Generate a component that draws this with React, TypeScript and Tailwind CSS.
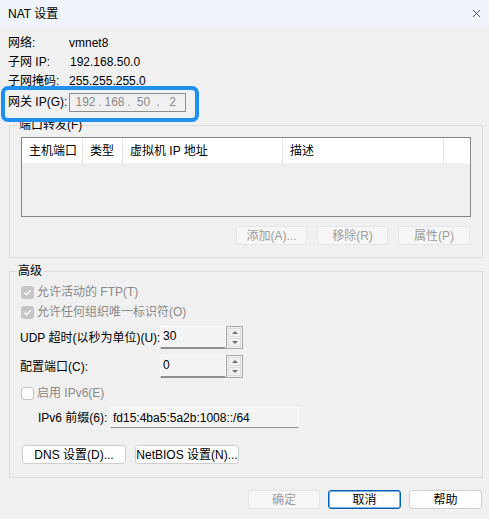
import { X } from "lucide-react";

const Btn = ({ label, w, disabled, focused }: { label: string; w: string; disabled?: boolean; focused?: boolean }) => (
  <div
    className={`${w} h-[19px] flex items-center justify-center rounded-[3px] border text-[12px] leading-none ${
      disabled
        ? "border-[#e5e5e5] bg-[#f6f6f6] text-[#9d9d9d]"
        : focused
        ? "border-[#005fb8] bg-[#fdfdfd] text-black shadow-[inset_0_0_0_0.5px_#005fb8]"
        : "border-[#cfcfcf] bg-[#fdfdfd] text-black"
    }`}
  >
    {label}
  </div>
);

const CheckBox = ({ checked, label }: { checked?: boolean; label: string }) => (
  <div className="h-[20px] flex items-center gap-[3px]">
    {checked ? (
      <span className="h-[13px] w-[13px] rounded-[3px] bg-[#c6c6c6] flex items-center justify-center">
        <svg width="9" height="9" viewBox="0 0 9 9">
          <path d="M1.5 4.8 L3.6 6.8 L7.6 2.2" fill="none" stroke="#ffffff" strokeWidth="1.3" />
        </svg>
      </span>
    ) : (
      <span className="h-[13px] w-[13px] rounded-[3px] border border-[#c4c4c4] bg-[#fbfbfb]" />
    )}
    <span className="text-[12px] leading-none text-[#8a8a8a]">{label}</span>
  </div>
);

const Spinner = ({ value }: { value: string }) => (
  <div className="flex h-[23px] shrink-0">
    <div className="w-[66px] h-full bg-[#f3f3f3] border border-[#fbfbfb] border-b-2 border-b-[#8f8f8f] pl-[2px] flex items-start pt-[3px] text-[12px] leading-none text-black">
      {value}
    </div>
    <div className="w-[17px] h-full border border-[#a8a8a8] p-[1px] flex flex-col gap-[1px]">
      <div className="flex-1 border border-[#dcdcdc] bg-[#f0f0f0] flex items-center justify-center">
        <svg width="6" height="3" viewBox="0 0 6 3">
          <path d="M0 3 L3 0 L6 3 Z" fill="#707070" />
        </svg>
      </div>
      <div className="flex-1 border border-[#dcdcdc] bg-[#f0f0f0] flex items-center justify-center">
        <svg width="6" height="3" viewBox="0 0 6 3">
          <path d="M0 0 L6 0 L3 3 Z" fill="#707070" />
        </svg>
      </div>
    </div>
  </div>
);

const columns = [
  { name: "主机端口", w: "w-[61px]" },
  { name: "类型", w: "w-[40px]" },
  { name: "虚拟机 IP 地址", w: "w-[160px]" },
  { name: "描述", w: "w-[161px]" },
  { name: "", w: "flex-1" },
];

const octets = ["192", "168", "50", "2"];

export default function App() {
  return (
    <div className="relative w-[489px] h-[519px] bg-[#f0f0f0] font-['Liberation_Sans','Noto_Sans_CJK_SC',sans-serif] text-[12px] text-black overflow-hidden">
      {/* title bar */}
      <div className="h-[27px] bg-[#eef4f9] flex items-center justify-between pl-[8px] pr-[6px]">
        <span className="text-[12px] leading-none">NAT 设置</span>
        <X size={13} strokeWidth={1.3} className="text-[#1a1a1a]" />
      </div>

      <div className="px-[8px]">
        {/* network info */}
        <div className="pt-[6px]">
          <div className="h-[19px] flex items-center">
            <span className="w-[61px]">网络:</span>
            <span>vmnet8</span>
          </div>
          <div className="h-[19px] flex items-center">
            <span className="w-[62px]">子网 IP:</span>
            <span>192.168.50.0</span>
          </div>
          <div className="h-[19px] flex items-center">
            <span className="w-[61px]">子网掩码:</span>
            <span>255.255.255.0</span>
          </div>
          <div className="mt-[2px] h-[20px] flex items-center">
            <span className="w-[61px] whitespace-nowrap">网关 IP(G):</span>
            <div className="w-[117px] h-[19px] border border-[#8c8c8c] bg-[#f0f0f0] flex items-center pl-[5px] text-[#8a8a8a]">
              {octets.map((o, i) => (
                <div key={i} className="flex items-center">
                  <span className="w-[21px] text-center">{o}</span>
                  {i < octets.length - 1 && <span className="w-[8px] text-center">.</span>}
                </div>
              ))}
            </div>
          </div>
        </div>

        {/* port forwarding group */}
        <div className="relative mt-[13px] ml-[1px] w-[474px] h-[133px] border border-[#dcdcdc] pt-[11px] pl-[11px]">
          <span className="absolute -top-[9px] left-[8px] bg-[#f0f0f0] px-[1px] leading-[16px]">端口转发(F)</span>
          <div className="w-[450px] h-[80px] border border-[#868686] bg-[#f0f0f0]">
            <div className="h-[25px] bg-white flex">
              {columns.map((c, i) => (
                <div
                  key={i}
                  className={`${c.w} h-full flex items-center pl-[7px] ${i < columns.length - 1 ? "border-r border-[#e5e5e5]" : ""}`}
                >
                  {c.name}
                </div>
              ))}
            </div>
          </div>
          <div className="mt-[9px] w-[450px] flex justify-end gap-[10px] pr-[1px]">
            <Btn label="添加(A)..." w="w-[71px]" disabled />
            <Btn label="移除(R)" w="w-[71px]" disabled />
            <Btn label="属性(P)" w="w-[72px]" disabled />
          </div>
        </div>

        {/* advanced group */}
        <div className="relative mt-[13px] ml-[1px] w-[474px] h-[207px] border border-[#dcdcdc] pt-[10px] pl-[11px]">
          <span className="absolute -top-[9px] left-[7px] bg-[#f0f0f0] px-[1px] leading-[16px]">高级</span>
          <CheckBox checked label="允许活动的 FTP(T)" />
          <CheckBox checked label="允许任何组织唯一标识符(O)" />
          <div className="mt-[4px] flex items-center -ml-[1px]">
            <span className="w-[140px] shrink-0 whitespace-nowrap">UDP 超时(以秒为单位)(U):</span>
            <Spinner value="30" />
          </div>
          <div className="mt-[6px] flex items-center -ml-[1px]">
            <span className="w-[140px] shrink-0 whitespace-nowrap">配置端口(C):</span>
            <Spinner value="0" />
          </div>
          <div className="mt-[5px]">
            <CheckBox label="启用 IPv6(E)" />
          </div>
          <div className="mt-[4px] flex items-center pl-[17px]">
            <span className="w-[72px] shrink-0 whitespace-nowrap">IPv6 前缀(6):</span>
            <div className="w-[189px] h-[21px] bg-[#f3f3f3] border border-[#fbfbfb] border-b-[#8f8f8f] flex items-center pl-[2px]">
              fd15:4ba5:5a2b:1008::/64
            </div>
          </div>
          <div className="mt-[17px] flex gap-[9px] pl-[1px]">
            <Btn label="DNS 设置(D)..." w="w-[104px]" />
            <Btn label="NetBIOS 设置(N)..." w="w-[104px]" />
          </div>
        </div>

        {/* dialog buttons */}
        <div className="mt-[12px] w-[475px] flex justify-end gap-[8px] pr-[1px]">
          <Btn label="确定" w="w-[72px]" disabled />
          <Btn label="取消" w="w-[73px]" focused />
          <Btn label="帮助" w="w-[73px]" />
        </div>
      </div>

      {/* highlight annotation */}
      <div className="absolute left-[1px] top-[86px] w-[198px] h-[36px] border-[4px] border-[#1e90f0] rounded-[7px] pointer-events-none" />
    </div>
  );
}
